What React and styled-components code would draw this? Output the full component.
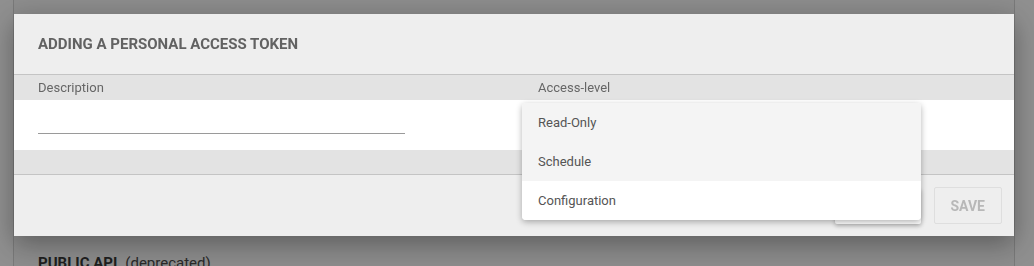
import React from 'react';
import styled, { createGlobalStyle } from 'styled-components'

const GlobalStyle = createGlobalStyle`
html, body {
  margin: 0;
  padding: 0;
}
body {
  font-family: Roboto, "Liberation Sans", Arial, sans-serif;
  background: #efefef;
  overflow: hidden;
}
`

const Page = styled.div`
height: 266px;
padding: 0 19px 0 13px;
overflow: hidden;
`

const Panel = styled.section`
height: 100%;
background: #e9e9e9;
border-left: 1px solid #c9c9c9;
border-right: 1px solid #c9c9c9;
padding: 253px 24px 0;
box-sizing: border-box;
`

const PanelTitle = styled.h2`
margin: 0;
font-size: 15px;
line-height: 20px;
font-weight: 700;
color: #333;

span {
  font-weight: 400;
  color: #444;
  margin-left: 8px;
}
`

const Overlay = styled.div`
position: fixed;
inset: 0;
background: rgba(0, 0, 0, 0.4);
display: flex;
align-items: flex-start;
padding: 14px 0 0 14px;
`

const Modal = styled.div`
width: 1000px;
background: #eeeeee;
box-shadow: 0 8px 26px rgba(0, 0, 0, 0.35);
`

const ModalHeader = styled.header`
height: 60px;
padding: 0 24px;
display: flex;
align-items: center;
border-bottom: 1px solid #c4c4c4;
`

const ModalTitle = styled.h1`
margin: 0;
font-size: 15px;
font-weight: 700;
color: #626262;
text-transform: uppercase;
`

const Table = styled.div`
border-bottom: 1px solid #c4c4c4;
`

const Row = styled.div`
display: grid;
grid-template-columns: 1fr 1fr;
height: ${p => p.$height}px;
background: ${p => p.$bg};
`

const HeadCell = styled.div`
padding: 0 24px;
font-size: 13px;
line-height: 25px;
color: #666;
`

const Cell = styled.div`
position: relative;
padding: 10px 24px 0;
`

const TextInput = styled.input`
width: 367px;
height: 24px;
border: none;
border-bottom: 1px solid #9a9a9a;
background: transparent;
outline: none;
padding: 0;
font-family: inherit;
font-size: 13px;
box-sizing: border-box;
`

const Menu = styled.ul`
position: absolute;
top: 3px;
left: 8px;
width: 399px;
margin: 0;
padding: 0;
list-style: none;
background: #fff;
border-radius: 4px;
overflow: hidden;
box-shadow: 0 2px 6px rgba(0, 0, 0, 0.3);
z-index: 2;
`

const MenuItem = styled.li`
height: 39px;
padding: 0 16px;
display: flex;
align-items: center;
font-size: 13px;
color: #555;
background: ${p => (p.$active ? '#f4f4f4' : '#fff')};
`

const Footer = styled.footer`
height: 61px;
display: flex;
justify-content: flex-end;
align-items: center;
gap: 13px;
padding: 0 12px;
`

const Button = styled.button`
height: ${p => (p.$raised ? 36 : 37)}px;
min-width: ${p => (p.$raised ? 84 : 68)}px;
padding: 0 16px;
font-family: inherit;
font-size: 14px;
font-weight: 700;
text-transform: uppercase;
border-radius: 2px;
cursor: pointer;
background: ${p => (p.$raised ? '#fff' : 'transparent')};
color: ${p => (p.$raised ? '#555' : '#b8b8b8')};
border: ${p => (p.$raised ? 'none' : '1px solid #dedede')};
box-shadow: ${p => (p.$raised ? '0 2px 4px rgba(0, 0, 0, 0.25)' : 'none')};
`

const levels = ['Read-Only', 'Schedule', 'Configuration']

export default function App() {
  return (
    <>
      <GlobalStyle />
      <Page>
        <Panel>
          <PanelTitle>PUBLIC API<span>(deprecated)</span></PanelTitle>
        </Panel>
      </Page>
      <Overlay>
        <Modal>
          <ModalHeader>
            <ModalTitle>Adding a personal access token</ModalTitle>
          </ModalHeader>
          <Table>
            <Row $height={25} $bg="#e3e3e3">
              <HeadCell>Description</HeadCell>
              <HeadCell>Access-level</HeadCell>
            </Row>
            <Row $height={50} $bg="#fff">
              <Cell>
                <TextInput />
              </Cell>
              <Cell>
                <Menu>
                  {levels.map((l, i) => (
                    <MenuItem key={l} $active={i < 2}>{l}</MenuItem>
                  ))}
                </Menu>
              </Cell>
            </Row>
            <Row $height={24} $bg="#e3e3e3" />
          </Table>
          <Footer>
            <Button $raised>Cancel</Button>
            <Button disabled>Save</Button>
          </Footer>
        </Modal>
      </Overlay>
    </>
  )
}
